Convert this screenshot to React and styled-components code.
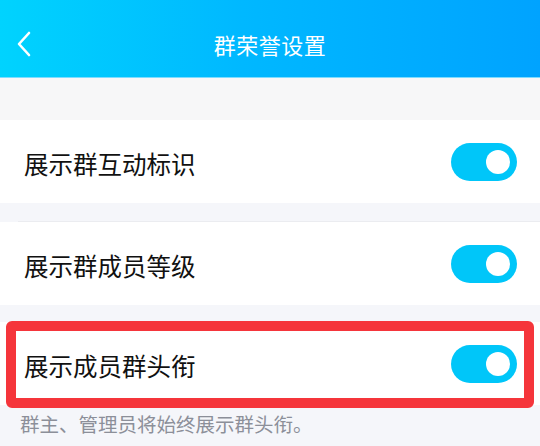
import React from "react";
import styled, { createGlobalStyle } from "styled-components";

const GlobalStyle = createGlobalStyle`
	html, body {
		margin: 0;
		padding: 0;
		background: #f5f6fa;
		font-family: "Noto Sans CJK SC", "Noto Sans", sans-serif;
	}
`;

const Page = styled.div`
	width: 540px;
	height: 446px;
	overflow: hidden;
	display: flex;
	flex-direction: column;
	background: #f5f6fa;
`;

const Header = styled.div`
	height: 77px;
	box-sizing: border-box;
	padding: 10px 12px 0;
	display: flex;
	align-items: center;
	position: relative;
	background: linear-gradient(90deg, #00d3fe 0%, #00b8ff 45%, #00a3ff 100%);
	color: #ffffff;
`;

const HeaderEdge = styled.div`
	height: 1px;
	background: #7fdcff;
`;

const BackButton = styled.div`
	width: 24px;
	height: 30px;
	display: flex;
	align-items: center;
	justify-content: center;
`;

const Title = styled.div`
	position: absolute;
	left: 0;
	right: 0;
	top: 10px;
	bottom: 0;
	display: flex;
	align-items: center;
	justify-content: center;
	font-size: 22px;
	letter-spacing: 0.5px;
	pointer-events: none;
`;

const Gap = styled.div`
	height: ${(p) => p.size}px;
	background: ${(p) => p.bg || "#f5f6fa"};
`;

const Row = styled.div`
	height: 83px;
	box-sizing: border-box;
	padding: 0 23px 0 24px;
	display: flex;
	align-items: center;
	justify-content: space-between;
	background: #ffffff;
	position: relative;
`;

const Divider = styled.div`
	height: 1px;
	margin-left: 18px;
	background: #ebecf0;
`;

const Label = styled.div`
	font-size: 24.5px;
	color: #111111;
	padding-top: 3px;
`;

const Track = styled.div`
	width: 66px;
	height: 38px;
	border-radius: 19px;
	background: #00c6f9;
	display: flex;
	align-items: center;
	justify-content: flex-end;
	padding-right: 7px;
	box-sizing: border-box;
`;

const Knob = styled.div`
	width: 24px;
	height: 24px;
	border-radius: 50%;
	background: #ffffff;
`;

const Highlight = styled.div`
	position: absolute;
	left: 6px;
	right: 6px;
	top: -1px;
	bottom: -3px;
	border: 10px solid #f5353b;
	border-radius: 6px;
	pointer-events: none;
`;

const Caption = styled.div`
	padding: 4px 20px 0;
	font-size: 19.5px;
	color: #8c8f99;
`;

const Toggle = () => (
	<Track>
		<Knob />
	</Track>
);

const App = () => (
	<Page>
		<GlobalStyle />
		<Header>
			<BackButton>
				<svg width="14" height="26" viewBox="0 0 14 26" fill="none">
					<path d="M12 2 L2 13 L12 24" stroke="#ffffff" strokeWidth="2.6" strokeLinecap="round" strokeLinejoin="round" />
				</svg>
			</BackButton>
			<Title>群荣誉设置</Title>
		</Header>
		<HeaderEdge />

		<Gap size={42} bg="#f7f7f8" />

		<Row>
			<Label>展示群互动标识</Label>
			<Toggle />
		</Row>

		<Gap size={18} />
		<Divider />

		<Row>
			<Label>展示群成员等级</Label>
			<Toggle />
		</Row>

		<Gap size={17} />

		<Row>
			<Label>展示成员群头衔</Label>
			<Toggle />
			<Highlight />
		</Row>

		<Caption>群主、管理员将始终展示群头衔。</Caption>
	</Page>
);

export default App;
